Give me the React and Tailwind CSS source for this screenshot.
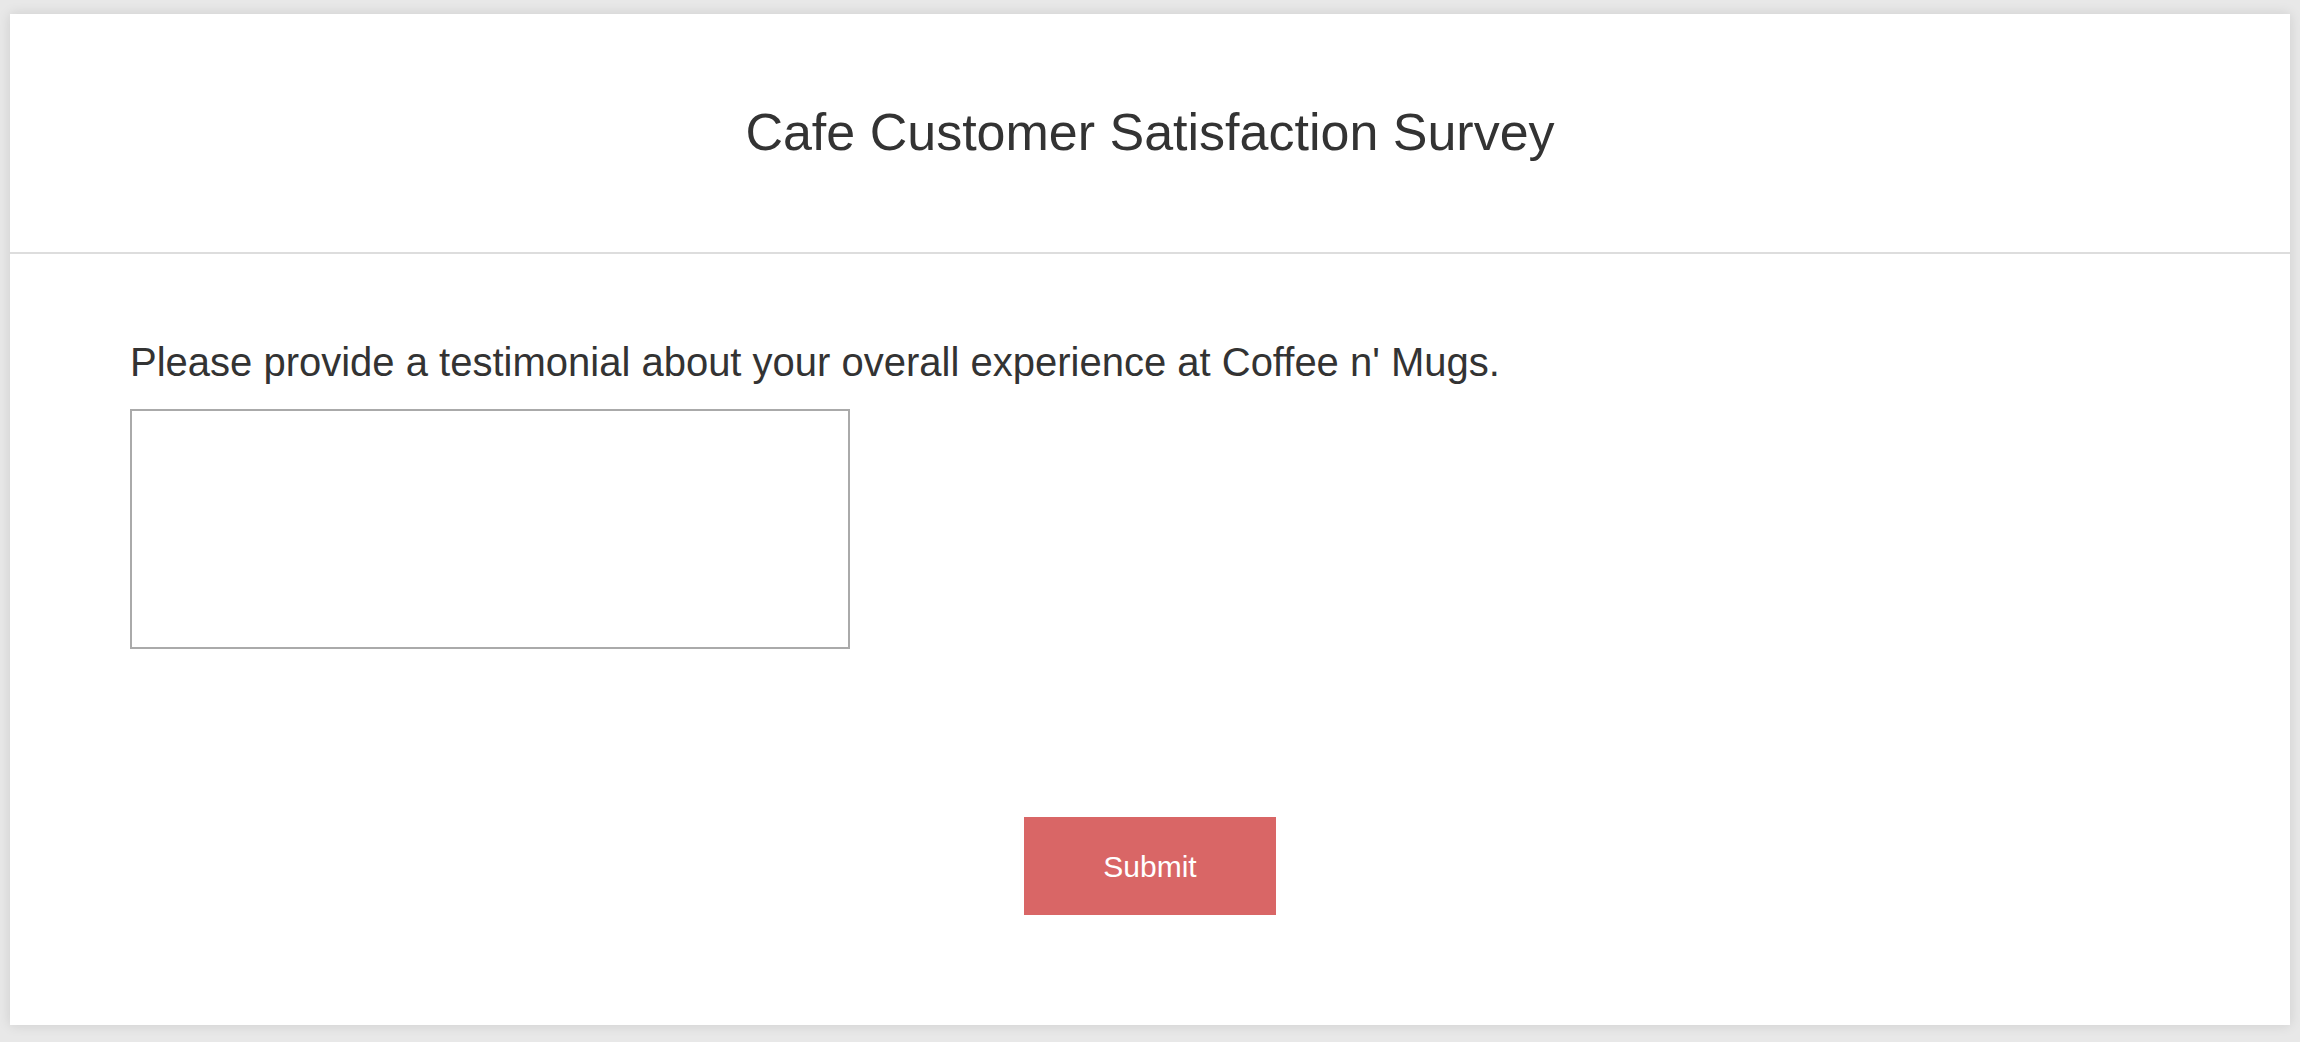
import React, { useState } from "react";

const App = () => {
  const [testimonial, setTestimonial] = useState("");

  return (
    <div className="min-h-screen bg-[#e8e8e8] px-[10px] pt-[14px] pb-[15px] font-['Liberation_Sans',Arial,sans-serif] text-[#333333]">
      <div className="bg-white shadow-[0_0_12px_rgba(0,0,0,0.12)]">
        {/* header */}
        <div className="h-[240px] flex items-center justify-center border-b-2 border-[#dddddd]">
          <h1 className="text-[52px] leading-[60px] font-normal -mt-[3px]">
            Cafe Customer Satisfaction Survey
          </h1>
        </div>

        {/* question */}
        <div className="px-[120px] pt-[85px] pb-[110px]">
          <label className="block text-[40px] leading-[46px]">
            Please provide a testimonial about your overall experience at Coffee n' Mugs.
          </label>
          <textarea
            value={testimonial}
            onChange={(e) => setTestimonial(e.target.value)}
            className="mt-[24px] block w-[720px] h-[240px] border-2 border-[#aaaaaa] resize-none outline-none p-2 text-[28px]"
          />

          <div className="flex justify-center mt-[168px]">
            <button
              type="button"
              className="w-[252px] h-[98px] bg-[#d96666] text-white text-[30px]"
            >
              Submit
            </button>
          </div>
        </div>
      </div>
    </div>
  );
};

export default App;
